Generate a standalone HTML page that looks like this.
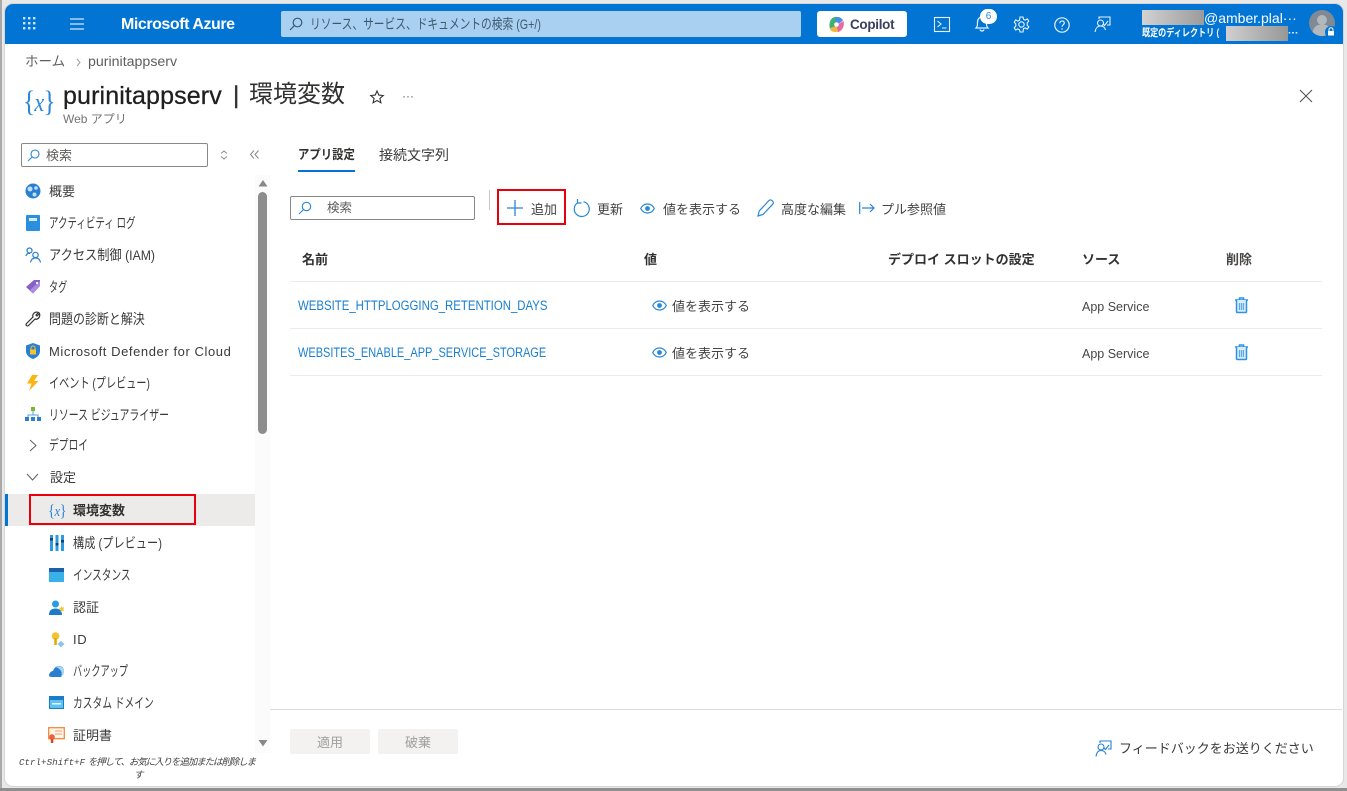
<!DOCTYPE html>
<html lang="ja"><head><meta charset="utf-8"><title>purinitappserv | 環境変数</title>
<style>
*{box-sizing:border-box}
html,body{margin:0;padding:0;width:1347px;height:791px;overflow:hidden;background:#fff;font-family:"Liberation Sans","Noto Sans CJK JP",sans-serif;color:#323130}
body{filter:blur(.3px)}
.a{position:absolute;white-space:nowrap;line-height:1;transform-origin:0 50%}
svg{position:absolute;overflow:visible}
.m{font-size:13px;color:#3b3a39}
.k{font-size:14px;color:#3b3a39}
.h{font-size:13px;font-weight:bold;color:#323130}
.l{font-size:12.5px;color:#1a7fd0}
.t{font-size:13px;color:#444}
.hr{position:absolute;height:1px;background:#edebe9}
</style></head><body>
<!-- window frame -->
<div class="a" style="left:0;top:0;width:1347px;height:791px;background:#e8e8e8"></div>
<div class="a" style="left:0;top:0;width:2px;height:791px;background:#a9a9a9"></div>
<div class="a" style="left:0;top:788px;width:1347px;height:3px;background:#8f8f8f"></div>
<div class="a" style="left:4px;top:3px;width:1340px;height:784px;background:#fff;border-radius:9px;border:1px solid #d6d6d6"></div>
<!-- header -->
<div class="a" style="left:5px;top:4px;width:1338px;height:40px;background:#0274d3;border-radius:8px 8px 0 0"></div>
<svg style="left:23px;top:17px" width="13" height="13" fill="#cfe4f7"><rect x="0" y="0" width="2.4" height="2.4"/><rect x="5" y="0" width="2.4" height="2.4"/><rect x="10" y="0" width="2.4" height="2.4"/><rect x="0" y="5" width="2.4" height="2.4"/><rect x="5" y="5" width="2.4" height="2.4"/><rect x="10" y="5" width="2.4" height="2.4"/><rect x="0" y="10" width="2.4" height="2.4"/><rect x="5" y="10" width="2.4" height="2.4"/><rect x="10" y="10" width="2.4" height="2.4"/></svg>
<svg style="left:70px;top:18px" width="15" height="12" stroke="#d5e8f8" stroke-width="1.3"><path d="M0 1h14M0 6h14M0 11h14"/></svg>
<div class="a" style="left:121px;top:17px;font-size:16px;font-weight:bold;color:#fff;letter-spacing:-.45px">Microsoft Azure</div>
<div class="a" style="left:281px;top:11px;width:520px;height:26px;background:#a9d0f0;border-radius:2px"></div>
<svg style="left:289px;top:17px" width="14" height="14" fill="none" stroke="#35597a" stroke-width="1.2"><circle cx="8.5" cy="5.500" r="4.300"/><path d="M5.300 8.700L1 13"/></svg>
<div class="a" style="left:310px;top:17px;font-size:14px;color:#3e5a72;transform:scaleX(.766)">リソース、サービス、ドキュメントの検索 (G+/)</div>
<div class="a" style="left:817px;top:11px;width:90px;height:26px;background:#fff;border-radius:3px"></div>
<svg style="left:828px;top:16px" width="17" height="17"><path d="M8 1C4 1 2 4 1.500 8c-.4 3 .5 6 3 7.500L8 9z" fill="#3fb26e"/><path d="M8 1c3-.5 6 1 7 3.500L9 9 7 6z" fill="#4b8ee8"/><path d="M15.500 5c1.200 4-.5 9-5 11l-3-1L9 9z" fill="#e86aa0"/><path d="M2 12c1 4 5 4.500 8 3.500L8.500 10z" fill="#f2b63c"/><circle cx="8.500" cy="8.500" r="2.300" fill="#fff"/></svg>
<div class="a" style="left:850px;top:17px;font-size:14px;font-weight:bold;color:#3b3f5c;letter-spacing:-.3px;transform:scaleX(.96)">Copilot</div>
<svg style="left:934px;top:17px" width="17" height="16" fill="none" stroke="#e8f2fb" stroke-width="1.100"><rect x=".5" y=".5" width="15" height="14"/><path d="M3.500 4l3.500 3-3.500 3M8 11h4.500"/></svg>
<svg style="left:975px;top:15px" width="15" height="18" fill="none" stroke="#e8f2fb" stroke-width="1.200"><path d="M1 13c1.500-1.500 1.500-3 1.500-6S4.500 2 7 2s4.500 2 4.500 5 0 4.500 1.500 6zM5 14.500c.5 2 3.500 2 4 0"/></svg>
<div class="a" style="left:980px;top:9px;width:17px;height:15px;border-radius:8px;background:#fff;color:#2b86d8;font-size:10px;text-align:center;line-height:15px">6</div>
<svg style="left:1013px;top:16px" width="17" height="17" fill="none" stroke="#e8f2fb" stroke-width="1.100"><circle cx="8.500" cy="8.500" r="2.700"/><path d="M7 1h3l.5 2.300 1.700.8 2.100-1.200 1.500 2.300-1.600 1.600v2.400l1.600 1.600-1.500 2.300-2.100-1.200-1.700.8L10 16H7l-.5-2.300-1.700-.8-2.100 1.200-1.500-2.300 1.600-1.600V7.800L1.200 6.200l1.500-2.300 2.100 1.200 1.700-.8z"/></svg>
<svg style="left:1054px;top:17px" width="16" height="16" fill="none" stroke="#e8f2fb" stroke-width="1.200"><circle cx="8" cy="8" r="7.200"/><path d="M5.800 6.200c0-3 4.500-3 4.500-.2 0 1.800-2.300 1.800-2.300 3.800"/><path d="M8 11.300v1.300" stroke-width="1.400"/></svg>
<svg style="left:1094px;top:16px" width="17" height="17" fill="none" stroke="#e8f2fb" stroke-width="1.100"><path d="M5 3V1h11v8h-3"/><path d="M9 8l1.500 1.500L14 5"/><circle cx="6.500" cy="7" r="3"/><path d="M1 16c.5-3.500 2.500-6 5.500-6s4.500 2 5 4"/></svg>
<div class="a" style="left:1142px;top:10px;width:62px;height:15px;background:linear-gradient(90deg,#d2d2d2,#9b9b9b)"></div>
<div class="a" style="left:1204px;top:11px;font-size:14px;color:#fff">@amber.plal···</div>
<div class="a" style="left:1142px;top:28px;font-size:10.500px;font-weight:bold;color:#fff;transform:scaleX(.77)">既定のディレクトリ (</div>
<div class="a" style="left:1226px;top:26px;width:62px;height:15px;background:linear-gradient(90deg,#d0d0d0,#979797)"></div>
<div class="a" style="left:1288px;top:28px;font-size:10.500px;font-weight:bold;color:#fff">···</div>
<svg style="left:1309px;top:10px" width="28" height="28"><circle cx="13" cy="13" r="13" fill="#7f8a94"/><circle cx="13" cy="10" r="5" fill="#b3b8bd"/><path d="M3.500 22c1.500-6 5-7.500 9.500-7.500s8 1.500 9.500 7.500a13 13 0 0 1-19 0z" fill="#b3b8bd"/><circle cx="22" cy="22" r="6" fill="#0274d3"/><rect x="19" y="21" width="6" height="4.500" fill="#fff"/><path d="M20 21v-1.300a2 2 0 0 1 4 0V21" fill="none" stroke="#fff"/></svg>

<!-- breadcrumb/title -->
<div class="a" style="left:25px;top:55px;font-size:13.500px;color:#605e5c">ホーム</div>
<svg style="left:76px;top:58px" width="6" height="9" fill="none" stroke="#a19f9d"><path d="M1 1l3 3.500L1 8"/></svg>
<div class="a" style="left:88px;top:55px;font-size:14.200px;color:#605e5c">purinitappserv</div>
<div class="a" style="left:23px;top:87px;font-size:30px;font-family:'Liberation Serif',serif;font-weight:normal;color:#2a86d8;letter-spacing:-1px;transform:scaleX(.85)">{<i style="font-size:26px">x</i>}</div>
<div class="a" style="left:63px;top:84px;font-size:25px;color:#201f1e;letter-spacing:.13px;-webkit-text-stroke:.3px #201f1e">purinitappserv</div>
<div class="a" style="left:233px;top:84px;font-size:24px;color:#323130;-webkit-text-stroke:.4px #323130">|</div>
<div class="a" style="left:249px;top:83px;font-size:24px;color:#323130">環境変数</div>
<div class="a" style="left:63px;top:113px;font-size:12px;color:#767472">Web アプリ</div>
<svg style="left:370px;top:90px" width="14" height="14" fill="none" stroke="#323130" stroke-width="1.100"><path d="M7 1l1.800 4.100 4.400.4-3.300 2.900 1 4.400L7 10.500 3.100 12.800l1-4.400L.8 5.500l4.400-.4z"/></svg>
<div class="a" style="left:402px;top:90px;font-size:12px;color:#605e5c">···</div>
<svg style="left:1299px;top:89px" width="14" height="14" stroke="#555" stroke-width="1.100"><path d="M1 1l12 12M13 1L1 13"/></svg>

<!-- sidebar -->
<div class="a" style="left:255px;top:175px;width:15px;height:578px;background:#fbfbfb"></div>
<div class="a" style="left:21px;top:143px;width:187px;height:24px;border:1px solid #8a8886;border-radius:2px"></div>
<svg style="left:27px;top:149px" width="13" height="13" fill="none" stroke="#2a86d8" stroke-width="1.100"><circle cx="8" cy="5" r="4"/><path d="M5 8l-4 4"/></svg>
<div class="a" style="left:46px;top:149px;font-size:13px;color:#605e5c">検索</div>
<svg style="left:220px;top:150px" width="8" height="10" fill="none" stroke="#8a8886"><path d="M1 3.500L4 1l3 2.500M1 6.500L4 9l3-2.500"/></svg>
<svg style="left:250px;top:150px" width="9" height="9" fill="none" stroke="#8a8886"><path d="M4 .5L.5 4.500 4 8.500M8.500 .5L5 4.500l3.500 4"/></svg>
<svg style="left:258px;top:180px" width="10" height="7" fill="#8a8886"><path d="M5 0l4.500 6.500H.5z"/></svg>
<div class="a" style="left:258px;top:192px;width:9px;height:242px;background:#8c8c8c;border-radius:5px"></div>
<svg style="left:258px;top:740px" width="10" height="7" fill="#8a8886"><path d="M5 6.500L9.500 0H.5z"/></svg>

<svg style="left:25px;top:183px" width="16" height="16"><circle cx="8" cy="8" r="7.500" fill="#2a7fd0"/><circle cx="5" cy="6" r="2.500" fill="#bfe0f7"/><circle cx="11" cy="5" r="1.800" fill="#bfe0f7"/><circle cx="9.500" cy="11.500" r="2" fill="#bfe0f7"/></svg>
<div class="a m" style="left:49px;top:185px">概要</div>
<svg style="left:26px;top:215px" width="14" height="16"><rect width="14" height="16" rx="1" fill="#2a8fdc"/><rect x="3" y="3" width="8" height="3" fill="#d3ecfb"/></svg>
<div class="a k" style="left:49px;top:216px;transform:scaleX(.678)">アクティビティ ログ</div>
<svg style="left:25px;top:247px" width="17" height="16" fill="none" stroke="#2a7fd0" stroke-width="1.200"><circle cx="4.500" cy="3.500" r="2.500"/><path d="M1 9c.5-2 2-3 4-2.500"/><circle cx="10.500" cy="8" r="2.700"/><path d="M5.500 15.500c.5-3 2.500-4.500 5-4.500s4.500 1.500 5 4.500"/></svg>
<div class="a k" style="left:49px;top:248px;transform:scaleX(.873)">アクセス制御 (IAM)</div>
<svg style="left:25px;top:279px" width="16" height="15"><path d="M1 8L9 1h6v6l-7 7.500z" fill="#8661c5"/><path d="M5 11l10-9v5l-7 7.500z" fill="#a98be0"/><circle cx="12" cy="4" r="1.100" fill="#fff"/></svg>
<div class="a k" style="left:49px;top:280px;transform:scaleX(.65)">タグ</div>
<svg style="left:25px;top:311px" width="16" height="16" fill="none" stroke="#323130" stroke-width="1.200"><path d="M1.500 12.500L8 6c-1-3 2-6 5.500-4.500L11 4l1 1 2.500-2.500C15.500 6 13 9 10 8l-6.500 6.500a1.400 1.400 0 0 1-2-2z"/></svg>
<div class="a k" style="left:49px;top:312px;transform:scaleX(.855)">問題の診断と解決</div>
<svg style="left:26px;top:343px" width="14" height="16"><path d="M7 0l7 2.500V8c0 4-3 6.500-7 8-4-1.500-7-4-7-8V2.500z" fill="#2a7fd0"/><rect x="4" y="6.500" width="6" height="5" fill="#f4c430"/><path d="M5 6.500V5a2 2 0 0 1 4 0v1.500" fill="none" stroke="#f4c430"/></svg>
<div class="a m" style="left:49px;top:345px;letter-spacing:.58px">Microsoft Defender for Cloud</div>
<svg style="left:26px;top:375px" width="13" height="16"><path d="M6 0h6L8 6h4.500L3 16l2.500-7.500H1z" fill="#fcb415"/></svg>
<div class="a k" style="left:49px;top:376px;transform:scaleX(.725)">イベント (プレビュー)</div>
<svg style="left:25px;top:407px" width="16" height="15"><path d="M8 3v5M3 11V8h10v3" fill="none" stroke="#5ea0d8"/><rect x="6" y="0" width="4" height="4" fill="#76b82a"/><rect x="0" y="10" width="4" height="4" fill="#2a7fd0"/><rect x="6" y="10" width="4" height="4" fill="#2a7fd0"/><rect x="12" y="10" width="4" height="4" fill="#2a7fd0"/></svg>
<div class="a k" style="left:49px;top:408px;transform:scaleX(.706)">リソース ビジュアライザー</div>
<svg style="left:29px;top:439px" width="8" height="13" fill="none" stroke="#605e5c"><path d="M1 1l6 5.500L1 12"/></svg>
<div class="a k" style="left:49px;top:438px;transform:scaleX(.697)">デプロイ</div>
<svg style="left:26px;top:473px" width="13" height="8" fill="none" stroke="#605e5c"><path d="M1 1l5.500 6L12 1"/></svg>
<div class="a m" style="left:50px;top:471px">設定</div>

<div class="a" style="left:5px;top:494px;width:250px;height:32px;background:#edebe9"></div>
<div class="a" style="left:5px;top:494px;width:3px;height:32px;background:#0274d3"></div>
<div class="a" style="left:29px;top:494px;width:167px;height:31px;border:2.500px solid #e8000d"></div>
<div class="a" style="left:48px;top:502px;font-size:17px;font-family:'Liberation Serif',serif;color:#2a86d8;letter-spacing:-.5px;transform:scaleX(.85)">{<i style="font-size:15px">x</i>}</div>
<div class="a" style="left:73px;top:504px;font-size:13px;font-weight:bold;color:#323130">環境変数</div>
<svg style="left:50px;top:535px" width="14" height="16"><rect x="0" width="3" height="16" fill="#2a9be0"/><rect x="5.500" width="3" height="16" fill="#2a9be0"/><rect x="11" width="3" height="16" fill="#2a9be0"/><rect x="0" y="3" width="3" height="2.500" fill="#123f6d"/><rect x="5.500" y="8" width="3" height="2.500" fill="#123f6d"/><rect x="11" y="5" width="3" height="2.500" fill="#123f6d"/></svg>
<div class="a k" style="left:73px;top:536px;transform:scaleX(.8)">構成 (プレビュー)</div>
<svg style="left:49px;top:568px" width="15" height="14"><rect width="15" height="10" y="0" fill="#1d5fa8"/><rect width="15" height="10" y="4" fill="#38b1e8"/></svg>
<div class="a k" style="left:73px;top:568px;transform:scaleX(.69)">インスタンス</div>
<svg style="left:49px;top:600px" width="16" height="15"><circle cx="6.500" cy="4" r="3.500" fill="#2a9be0"/><path d="M0 15c0-5 3-6.500 6.500-6.500S13 10 13 15z" fill="#1d7cc8"/><path d="M12 6l1.300 1.500 2-.2-1 2 .7 2-2-.5-1.500 1.200V9.500L10 8l2-.4z" fill="#f4c430"/></svg>
<div class="a m" style="left:73px;top:601px">認証</div>
<svg style="left:51px;top:632px" width="14" height="16"><circle cx="4.500" cy="4" r="3.800" fill="#f4c430"/><rect x="3.300" y="6" width="2.500" height="7" fill="#e0a800"/><path d="M10 9l3.500 3-3.500 3.500L6.500 12z" fill="#8cc5e8"/></svg>
<div class="a m" style="left:73px;top:633px;letter-spacing:.6px">ID</div>
<svg style="left:49px;top:664px" width="16" height="15"><path d="M0 12c0-3 2-5 4-5 1-3 3-5 6-5 3 0 5 2 5 5s-2 6-4 6H3c-2 0-3-1-3-1z" fill="#2a7fd0"/><path d="M7 3c3-2 8 0 8 4s-2 5-3 5c2-3 0-7-5-9z" fill="#a9d8f3"/></svg>
<div class="a k" style="left:73px;top:664px;transform:scaleX(.655)">バックアップ</div>
<svg style="left:49px;top:696px" width="15" height="13"><rect width="15" height="13" fill="#1d7cc8"/><rect x="1" y="4" width="13" height="8" fill="#5fc3ee"/><rect x="3" y="7" width="9" height="1.500" fill="#e6f5fc"/></svg>
<div class="a k" style="left:73px;top:696px;transform:scaleX(.697)">カスタム ドメイン</div>
<svg style="left:48px;top:727px" width="17" height="16"><rect x=".7" y=".7" width="15.600" height="11" fill="#fff4e8" stroke="#f08a3c" stroke-width="1.300"/><path d="M7 4h7M7 7h7" stroke="#e8a070"/><circle cx="4" cy="10" r="2.800" fill="#e8603c"/><rect x="2.800" y="12" width="2.500" height="4" fill="#d04a28"/></svg>
<div class="a m" style="left:73px;top:729px">証明書</div>
<div class="a" style="left:19px;top:758px;font-size:9.500px;font-style:italic;color:#444"><span style="font-family:'Liberation Mono',monospace;font-size:9.200px">Ctrl+Shift+F</span> <span style="letter-spacing:-1.100px">を押して、お気に入りを追加または削除しま</span></div>
<div class="a" style="left:134px;top:771px;font-size:9.500px;font-style:italic;color:#444">す</div>

<!-- tabs -->
<div class="a" style="left:298px;top:148px;font-size:13px;font-weight:bold;color:#323130;transform:scaleX(.875)">アプリ設定</div>
<div class="a" style="left:298px;top:170px;width:57px;height:2px;background:#0274d3"></div>
<div class="a" style="left:379px;top:148px;font-size:14px;color:#3b3a39">接続文字列</div>

<!-- toolbar -->
<div class="a" style="left:290px;top:196px;width:185px;height:24px;border:1px solid #8a8886;border-radius:2px"></div>
<svg style="left:298px;top:201px" width="14" height="14" fill="none" stroke="#2a86d8" stroke-width="1.100"><circle cx="8.500" cy="5.500" r="4.200"/><path d="M5.500 8.500L1 13"/></svg>
<div class="a" style="left:327px;top:202px;font-size:12.500px;color:#605e5c">検索</div>
<div class="a" style="left:489px;top:190px;width:1px;height:20px;background:#c8c6c4"></div>
<div class="a" style="left:497px;top:189px;width:69px;height:36px;border:2.500px solid #e8000d"></div>
<svg style="left:507px;top:200px" width="16" height="16" stroke="#2a86d8" stroke-width="1.300"><path d="M8 0v16M0 8h16"/></svg>
<div class="a t" style="left:531px;top:203px">追加</div>
<svg style="left:573px;top:199px" width="17" height="18" fill="none" stroke="#2a86d8" stroke-width="1.200"><path d="M5 3.500a7.500 7.500 0 1 0 5.500-.8M4.500 0v4h4"/></svg>
<div class="a t" style="left:597px;top:203px">更新</div>
<svg style="left:640px;top:203px" width="15" height="11" fill="none" stroke="#2a86d8" stroke-width="1.200"><path d="M.7 5.500C2.500 2 5 1 7.500 1s5 1 6.800 4.500C12.500 9 10 10 7.500 10S2.500 9 .7 5.500z"/><circle cx="7.500" cy="5.500" r="1.800" fill="#2a86d8"/></svg>
<div class="a t" style="left:663px;top:203px">値を表示する</div>
<svg style="left:757px;top:199px" width="17" height="18" fill="none" stroke="#2a86d8" stroke-width="1.200"><path d="M1 17l1.200-5L12 1.500c1-1 2.500-.5 3.500.5s1 2.300.2 3.200L6 15.500z"/></svg>
<div class="a t" style="left:781px;top:203px">高度な編集</div>
<svg style="left:859px;top:202px" width="16" height="12" fill="none" stroke="#2a86d8" stroke-width="1.200"><path d="M.7 0v12M3 6h12M11 2l4 4-4 4"/></svg>
<div class="a t" style="left:881px;top:203px">プル参照値</div>

<!-- table -->
<div class="a h" style="left:302px;top:253px">名前</div>
<div class="a h" style="left:644px;top:253px">値</div>
<div class="a h" style="left:888px;top:253px">デプロイ スロットの設定</div>
<div class="a h" style="left:1082px;top:253px">ソース</div>
<div class="a h" style="left:1226px;top:253px;color:#484644">削除</div>
<div class="hr" style="left:290px;top:281px;width:1032px"></div>
<div class="hr" style="left:290px;top:328px;width:1032px"></div>
<div class="hr" style="left:290px;top:375px;width:1032px"></div>
<div class="a" style="left:298px;top:299px;font-size:13.500px;color:#1a7fd0;transform:scaleX(.845)">WEBSITE_HTTPLOGGING_RETENTION_DAYS</div>
<div class="a" style="left:298px;top:346px;font-size:13.500px;color:#1a7fd0;transform:scaleX(.814)">WEBSITES_ENABLE_APP_SERVICE_STORAGE</div>
<svg style="left:652px;top:300px" width="15" height="11" fill="none" stroke="#2a86d8" stroke-width="1.200"><path d="M.7 5.500C2.500 2 5 1 7.500 1s5 1 6.800 4.500C12.500 9 10 10 7.500 10S2.500 9 .7 5.500z"/><circle cx="7.500" cy="5.500" r="1.800" fill="#2a86d8"/></svg>
<div class="a t" style="left:672px;top:300px">値を表示する</div>
<svg style="left:652px;top:347px" width="15" height="11" fill="none" stroke="#2a86d8" stroke-width="1.200"><path d="M.7 5.500C2.500 2 5 1 7.500 1s5 1 6.800 4.500C12.500 9 10 10 7.500 10S2.500 9 .7 5.500z"/><circle cx="7.500" cy="5.500" r="1.800" fill="#2a86d8"/></svg>
<div class="a t" style="left:672px;top:347px">値を表示する</div>
<div class="a" style="left:1082px;top:301px;font-size:12.500px;color:#484644">App Service</div>
<div class="a" style="left:1082px;top:348px;font-size:12.500px;color:#484644">App Service</div>
<svg style="left:1235px;top:297px" width="13" height="16" fill="none" stroke="#2f92e6" stroke-width="1.500"><path d="M0 3h13M4.500 3V1h4v2"/><path d="M1.500 3v11.500a1 1 0 0 0 1 1h8a1 1 0 0 0 1-1V3" fill="#d9ecfb"/><path d="M4.500 6v7M6.500 6v7M8.500 6v7" stroke="#5aa9ea" stroke-width="1.200"/></svg>
<svg style="left:1235px;top:344px" width="13" height="16" fill="none" stroke="#2f92e6" stroke-width="1.500"><path d="M0 3h13M4.500 3V1h4v2"/><path d="M1.500 3v11.500a1 1 0 0 0 1 1h8a1 1 0 0 0 1-1V3" fill="#d9ecfb"/><path d="M4.500 6v7M6.500 6v7M8.500 6v7" stroke="#5aa9ea" stroke-width="1.200"/></svg>

<!-- footer -->
<div class="a" style="left:270px;top:709px;width:1072px;height:1px;background:#dcdcdc"></div>
<div class="a" style="left:290px;top:729px;width:80px;height:25px;background:#f3f2f1;border-radius:2px;color:#a19f9d;font-size:13px;text-align:center;line-height:27px">適用</div>
<div class="a" style="left:378px;top:729px;width:80px;height:25px;background:#f3f2f1;border-radius:2px;color:#a19f9d;font-size:13px;text-align:center;line-height:27px">破棄</div>
<svg style="left:1095px;top:740px" width="17" height="17" fill="none" stroke="#2a7fd0" stroke-width="1.100"><path d="M5 3V1h11v8h-3"/><path d="M9 8l1.500 1.500L14 5"/><circle cx="6" cy="7" r="3"/><path d="M1 16.500c.5-3.500 2-6 5-6s4.500 2 5 4"/></svg>
<div class="a" style="left:1119px;top:742px;font-size:13px;color:#3b3a39">フィードバックをお送りください</div>
</body></html>
